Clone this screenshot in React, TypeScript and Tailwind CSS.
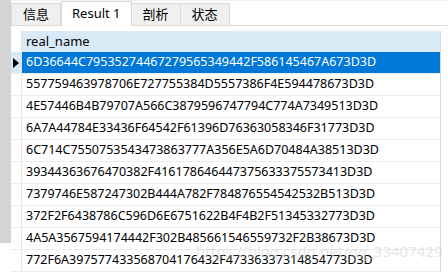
import React from "react";

const rows = [
  "6D36644C79535274467279565349442F586145467A673D3D",
  "557759463978706E727755384D5557386F4E594478673D3D",
  "4E57446B4B79707A566C3879596747794C774A7349513D3D",
  "6A7A44784E33436F64542F61396D76363058346F31773D3D",
  "6C714C7550753543473863777A356E5A6D70484A38513D3D",
  "39344363676470382F416178646447375633375573413D3D",
  "7379746E587247302B444A782F784876554542532B513D3D",
  "372F2F6438786C596D6E6751622B4F4B2F51345332773D3D",
  "4A5A3567594174442F302B485661546559732F2B38673D3D",
  "772F6A397577433568704176432F47336337314854773D3D",
];

const font = { fontFamily: '"Noto Sans", "Noto Sans CJK SC", sans-serif' };

const Tab = ({ label, active }: { label: string; active?: boolean }) =>
  active ? (
    <div className="h-[25px] -mb-px px-[10px] flex items-center bg-white border border-b-0 border-[#d9d9d9] text-[13px] text-black">
      {label}
    </div>
  ) : (
    <div className="h-[22px] px-[11px] flex items-center bg-[#f0f0f0] border border-b-0 border-[#d9d9d9] -ml-px first:ml-0 text-[13px] text-black">
      {label}
    </div>
  );

export default function App() {
  return (
    <div className="relative w-[448px] h-[273px] overflow-hidden bg-white flex" style={font}>
      <div className="w-[11px] h-[243px] bg-[#d4d4d4] shrink-0" />
      <div className="flex-1 flex flex-col">
        <div className="h-[26px] flex items-end border-b border-[#dadada] border-t border-t-[#f0f0f0]">
          <Tab label="信息" />
          <Tab label="Result 1" active />
          <Tab label="剖析" />
          <Tab label="状态" />
        </div>
        <div className="h-[5px]" />
        <div className="w-[430px] border-r border-[#d9d9d9]">
          <div className="flex h-[21px]">
            <div className="w-[11px] bg-white border-r border-[#e4e4e4]" />
            <div className="flex-1 bg-[#d9eaf7] pl-[4px] flex items-center text-[13px] text-black">
              real_name
            </div>
          </div>
          {rows.map((r, i) => (
            <div key={i} className="flex h-[22px] border-b border-[#ececec]">
              <div
                className={`w-[11px] border-r border-[#e4e4e4] flex items-center justify-center ${
                  i === 0 ? "bg-[#d9eaf7]" : "bg-white"
                }`}
              >
                {i === 0 && (
                  <svg width="6" height="10" viewBox="0 0 6 10">
                    <path d="M0 0 L6 5 L0 10 Z" fill="#000" />
                  </svg>
                )}
              </div>
              <div
                className={`flex-1 pl-[4px] flex items-center text-[12.5px] ${
                  i === 0 ? "bg-[#0078d7] text-white" : "bg-white text-black"
                }`}
              >
                {r}
              </div>
            </div>
          ))}
        </div>
      </div>
      <div className="absolute left-[196px] top-[240px] text-[15px] text-[#c4c4c4] opacity-40 pointer-events-none whitespace-nowrap">
        https://blog.csdn.net/qq_33407429
      </div>
    </div>
  );
}
